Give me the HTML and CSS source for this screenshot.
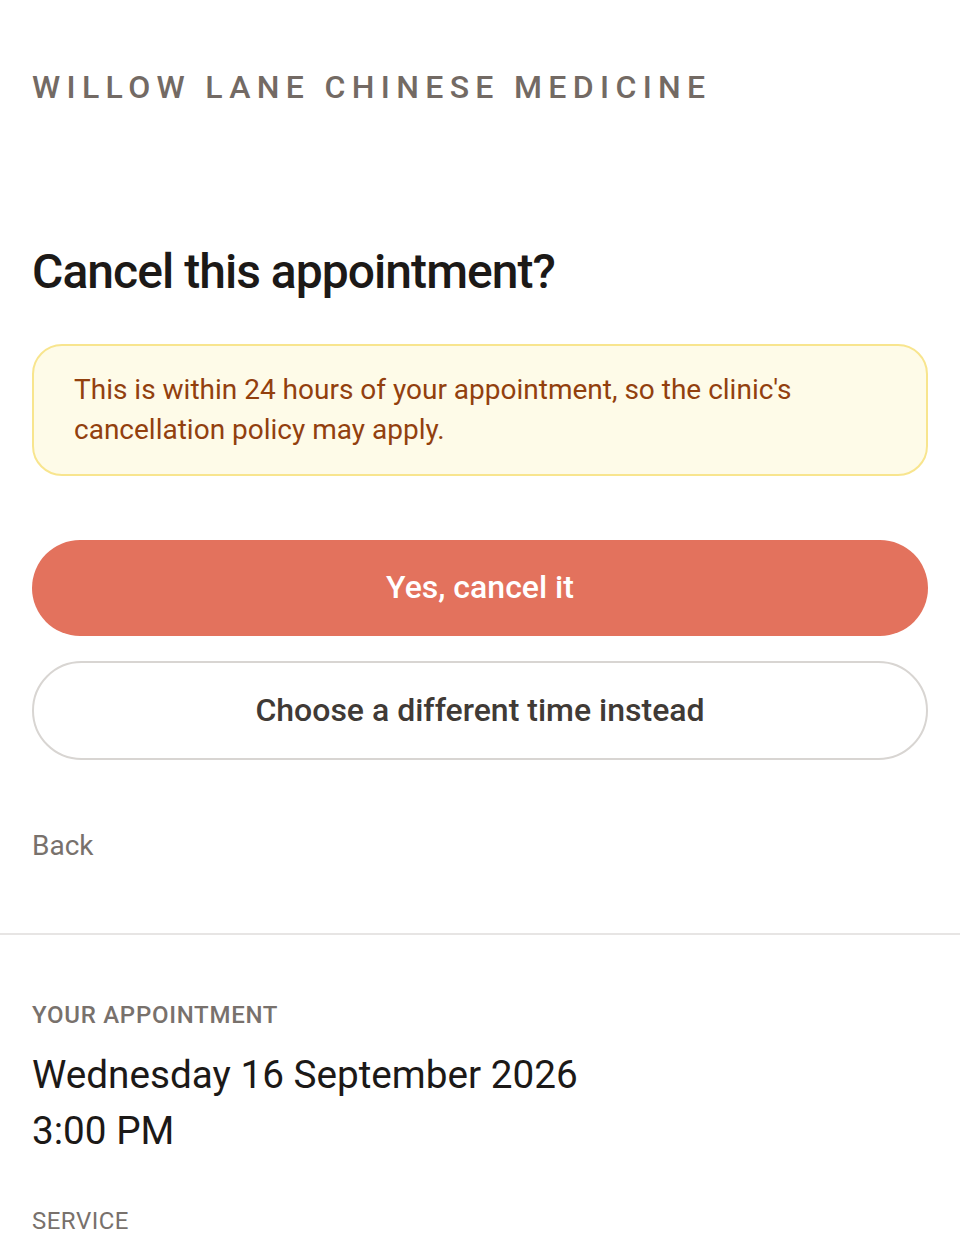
FILE: index.html
```html
<!DOCTYPE html>
<html lang="en">
<head>
<meta charset="utf-8">
<title>Cancel appointment</title>
<link rel="stylesheet" href="styles.css">
</head>
<body>
<div class="page">
  <header class="brand-bar">
    <div class="brand">WILLOW LANE CHINESE MEDICINE</div>
  </header>
  <main class="content">
    <h1 class="title">Cancel this appointment?</h1>
    <div class="notice">This is within 24 hours of your appointment, so the clinic's cancellation policy may apply.</div>
    <div class="actions">
      <button class="btn btn-danger">Yes, cancel it</button>
      <button class="btn btn-outline">Choose a different time instead</button>
    </div>
    <a class="back" href="#">Back</a>
  </main>
  <section class="summary">
    <div class="label label-strong">YOUR APPOINTMENT</div>
    <div class="when">Wednesday 16 September 2026<br>3:00 PM</div>
    <div class="label">SERVICE</div>
  </section>
</div>
</body>
</html>
```

FILE: styles.css
```css
* { box-sizing: border-box; }
html, body { margin: 0; padding: 0; background: #ffffff; }
body {
  font-family: Roboto, "Noto Sans", "Liberation Sans", sans-serif;
  color: #1c1917;
}
.page { width: 960px; }
.brand-bar { padding: 68px 32px 0 32px; }
.brand {
  font-size: 32px;
  font-weight: 500;
  letter-spacing: 0.198em;
  color: #736a64;
  line-height: 38px;
}
.content { padding: 138px 32px 70px 32px; }
.title {
  margin: 0;
  font-size: 48px;
  font-weight: 500;
  letter-spacing: -0.02em;
  line-height: 56px;
  color: #1c1917;
}
.notice {
  margin-top: 44px;
  padding: 24px 40px;
  background: #fefbe8;
  border: 2px solid #f8e58e;
  border-radius: 30px;
  color: #92400e;
  font-size: 28px;
  line-height: 40px;
}
.actions {
  margin-top: 64px;
  display: flex;
  flex-direction: column;
  gap: 25px;
}
.btn {
  font-family: inherit;
  width: 100%;
  height: 96px;
  padding: 0 0 2px 0;
  border-radius: 999px;
  font-size: 32px;
  font-weight: 500;
  cursor: pointer;
}
.btn-danger {
  background: #e3725d;
  color: #ffffff;
  border: none;
}
.btn-outline {
  height: 99px;
  background: #ffffff;
  color: #403a36;
  border: 2px solid #d8d5d2;
}
.back {
  display: block;
  margin-top: 69px;
  font-size: 28px;
  line-height: 34px;
  color: #78716c;
  text-decoration: none;
}
.summary {
  border-top: 2px solid #e7e5e4;
  padding: 65px 32px 0 32px;
}
.label {
  font-size: 24px;
  line-height: 30px;
  color: #78716c;
  letter-spacing: 0.02em;
}
.label-strong { font-weight: 500; letter-spacing: 0.03em; }
.when {
  margin-top: 17px;
  font-size: 38.7px;
  line-height: 56px;
  font-weight: 400;
  color: #1c1917;
  margin-bottom: 47px;
}
```
